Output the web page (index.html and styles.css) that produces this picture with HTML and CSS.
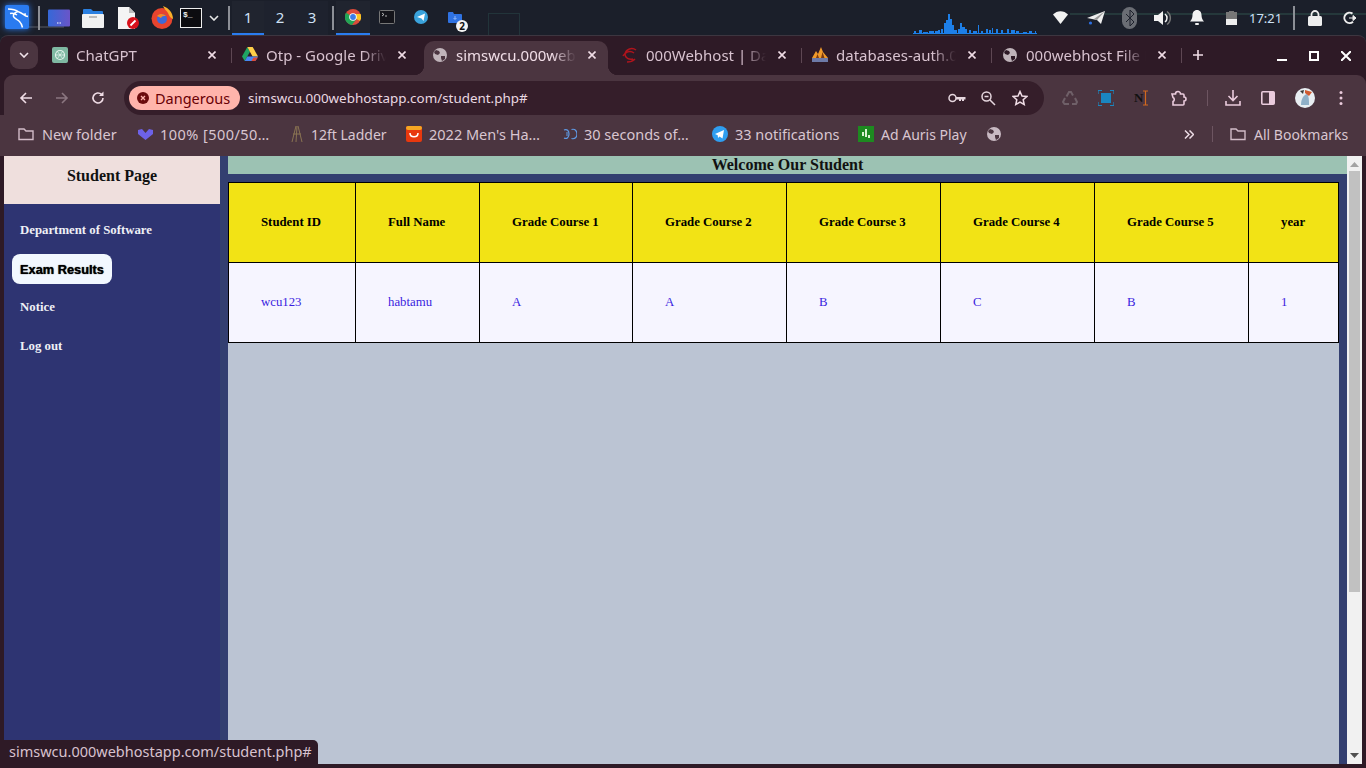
FILE: index.html
```html
<!DOCTYPE html>
<html lang="en">
<head>
<meta charset="utf-8">
<title>simswcu.000webhostapp.com/student.php#</title>
<link rel="stylesheet" href="styles.css">
</head>
<body>
<div class="panel">
  <div class="panel-left">
    <svg class="kali" width="28" height="28" viewBox="0 0 28 28"><rect width="24" height="24" x="2" y="1" rx="2" fill="#2a7bf0"/><path d="M5 5c4 0 8 1 11 3 3 1 5 3 7 4l2 .5M15 7.500c-3 1-5 3-4.500 5 .5 2 4 3 6 5 1.500 1.500 2.500 3.500 3 6M7 9.500c2-.5 5 0 7 1.500M20 10.500l3-.5" fill="none" stroke="#fff" stroke-width="1.500"/></svg>
    <i class="vsep first"></i>
    <svg class="pi desk" width="22" height="18" viewBox="0 0 22 18"><defs><linearGradient id="dk" x1="0" x2="1"><stop offset="0" stop-color="#3568d8"/><stop offset="1" stop-color="#6a55c8"/></linearGradient></defs><rect width="22" height="17" y=".5" rx="1" fill="url(#dk)"/><path d="M9 14h4" stroke="#fff" stroke-dasharray="1 .5" stroke-width="1.200"/></svg>
    <svg class="pi files" width="22" height="20" viewBox="0 0 22 20"><path d="M1 7V2a1 1 0 0 1 1-1h7l2 2h9a1 1 0 0 1 1 1v3z" fill="#2a7fe0"/><rect y="6" width="22" height="14" rx="1" fill="#f1f1f1"/><rect x="7" y="8" width="8" height="2" fill="#bbb"/></svg>
    <svg class="pi note" width="22" height="22" viewBox="0 0 22 22"><path d="M0 0h11l6 6v16H0z" fill="#f4f4f4"/><path d="M11 0l6 6h-6z" fill="#bbb"/><circle cx="15" cy="16" r="6" fill="#d8111b"/><path d="M12.500 18.500l5-5" stroke="#fff" stroke-width="1.800"/></svg>
    <svg class="pi fox" width="22" height="23" viewBox="0 0 22 23"><circle cx="11" cy="12.500" r="10.500" fill="#e7442e"/><path d="M12 0c6 2 10 7 10 13-3-1-4-4-5-6-1-2-4-4-5-7z" fill="#fbb02a"/><circle cx="11" cy="13" r="5" fill="#3f69d9"/><path d="M6 10c3-3 7-2 9 0-3 0-4 0-5 2z" fill="#f98a22"/></svg>
    <svg class="pi term" width="22" height="20" viewBox="0 0 22 20"><rect x=".5" y=".5" width="21" height="19" fill="#0c0c10" stroke="#eee"/><text x="3" y="9" class="term-t">$_</text></svg>
    <svg class="pi chev" width="10" height="6" viewBox="0 0 10 6"><path d="M1 1l4 4 4-4" fill="none" stroke="#e6e6e6" stroke-width="1.600"/></svg>
    <i class="vsep second"></i>
    <div class="work on">1</div>
    <div class="work">2</div>
    <div class="work">3</div>
    <i class="vsep third"></i>
    <div class="app on"><svg width="16" height="16" viewBox="0 0 16 16"><circle cx="8" cy="8" r="8" fill="#dd4b3a"/><path d="M8 8l7 4A8 8 0 0 0 15.500 5H8z" fill="#fbc522"/><path d="M8 8L1 3.800A8 8 0 0 0 7 16l4.500-6z" fill="#21a556"/><circle cx="8" cy="8" r="3.800" fill="#fff"/><circle cx="8" cy="8" r="2.900" fill="#3d7de8"/></svg></div>
    <div class="app"><svg width="16" height="14" viewBox="0 0 16 14"><rect x=".5" y=".5" width="15" height="13" rx="1" fill="#14141a" stroke="#777"/><path d="M3 3l2 1.500L3 6M6 6h2" fill="none" stroke="#ddd" stroke-width=".8"/></svg></div>
    <div class="app"><svg width="14" height="14" viewBox="0 0 14 14"><circle cx="7" cy="7" r="7" fill="#3aa3dc"/><path d="M3 7l8-3.500L9.500 11 7.500 8.500z" fill="#fff"/></svg></div>
    <div class="app badge-app"><svg width="14" height="11" viewBox="0 0 14 11"><path d="M0 1a1 1 0 0 1 1-1h4l1 2h7a1 1 0 0 1 1 1v7a1 1 0 0 1-1 1H1a1 1 0 0 1-1-1z" fill="#2f72e2"/><path d="M7 4v3M5.500 6L7 7.500 8.500 6" stroke="#bcd3ff" stroke-width=".7" fill="none"/></svg><b class="count">2</b></div>
  </div>
  <div class="panel-right">
    <svg class="spark" width="128" height="35" viewBox="0 0 128 35"><path fill="#1d7fe8" transform="translate(0 -1)" d="M2 34h124v1H2zM3 32h2v2H3zM8 31h3v3H8zM12 33h5v1h-5zM18 32h5v2h-5zM24 32h3v2h-3zM27 31h2v3h-2zM30 30h2v4h-2zM33 24h2v10h-2zM35 21h2v13h-2zM37 15h2v19h-2zM39 20h2v14h-2zM41 26h2v8h-2zM43 31h3v3h-3zM47 30h3v4h-3zM49 24h2v10h-2zM51 28h3v6h-3zM54 30h2v4h-2zM58 31h2v3h-2zM62 32h4v2h-4zM67 26h1v8h-1zM70 32h2v2h-2zM75 30h2v4h-2zM78 31h2v3h-2zM81 29h1v5h-1zM85 30h2v4h-2zM90 31h2v3h-2zM96 30h2v4h-2zM100 31h4v3h-4zM105 32h3v2h-3zM112 33h4v1h-4zM118 32h3v2h-3zM124 32h1v2h-1z"/></svg>
    <svg class="tray wifi" width="15" height="13" viewBox="0 0 15 13"><path d="M0 3.500C4-1 11-1 15 3.500L7.500 13z" fill="#f2f2f2"/></svg>
    <svg class="tray plane" width="18" height="15" viewBox="0 0 18 15"><path d="M0 8L18 1l-4 13-4-4z" fill="#eee"/><path d="M10 10l8-9L7 9z" fill="#999"/><circle cx="3.500" cy="13" r="1.600" fill="#2d6fe0"/></svg>
    <div class="tray bt"><svg width="8" height="18" viewBox="0 0 8 18"><path d="M0 5l8 8-4 4V1l4 4-8 8" fill="none" stroke="#1d212c" stroke-width="1"/></svg></div>
    <svg class="tray vol" width="18" height="16" viewBox="0 0 18 16"><path d="M0 5h4l5-4v14l-5-4H0z" fill="#f2f2f2"/><path d="M11 4a5 5 0 0 1 0 8" fill="none" stroke="#f2f2f2" stroke-width="1.500"/><path d="M13 1.500a8 8 0 0 1 0 13" fill="none" stroke="#777" stroke-width="1.500"/></svg>
    <svg class="tray bell" width="14" height="15" viewBox="0 0 14 15"><path d="M7 0c3 0 4.500 2.500 4.500 5 0 3 1 5 2.500 6.500H0C1.500 10 2.500 8 2.500 5 2.500 2.500 4 0 7 0z" fill="#f2f2f2"/><rect x="5" y="13" width="4" height="2" rx="1" fill="#f2f2f2"/></svg>
    <svg class="tray batt" width="11" height="14" viewBox="0 0 11 14"><rect x="3" y="0" width="5" height="1" fill="#777"/><rect x="0" y="1" width="11" height="7" fill="#777"/><rect x="0" y="8" width="11" height="6" fill="#eee"/></svg>
    <span class="clock">17:21</span>
    <i class="vsep fourth"></i>
    <svg class="tray lock" width="14" height="16" viewBox="0 0 14 16"><path d="M3.500 7V4.500a3.500 3.500 0 0 1 7 0V7" fill="none" stroke="#eee" stroke-width="1.800"/><rect y="6" width="14" height="10" rx="1.500" fill="#eee"/></svg>
    <svg class="tray power" width="14" height="14" viewBox="0 0 14 14"><path d="M9.500 2.600A5.200 5.200 0 1 0 10 10.800" fill="none" stroke="#eee" stroke-width="2"/><path d="M6 7h6M10 4.500L13 7l-3 2.500z" fill="#eee" stroke="#eee"/></svg>
  </div>
</div>

<div class="window">
  <div class="tabstrip">
    <button class="tabsearch"><svg width="10" height="6" viewBox="0 0 10 6"><path d="M1 1l4 4 4-4" fill="none" stroke="#f0e4ea" stroke-width="1.600"/></svg></button>
    <div class="tab"><svg class="fav" width="16" height="16" viewBox="0 0 16 16"><rect width="16" height="16" rx="2" fill="#7fb8a2"/><circle cx="8" cy="8" r="4.500" fill="none" stroke="#e4f1ec" stroke-width="1.200"/><path d="M5 4l6 8M11 4l-6 8M3.500 8h9" stroke="#e4f1ec" stroke-width=".8"/></svg><span class="tab-title">ChatGPT</span><svg class="x" width="8" height="8" viewBox="0 0 8 8"><path d="M.5.500l7 7M7.500.500l-7 7" stroke="#f0dde6" stroke-width="1.600"/></svg><i class="tsep"></i></div>
    <div class="tab"><svg class="fav" width="16" height="15" viewBox="0 0 16 15"><path d="M5.300 0L0 9.400 2.700 14 8 4.700z" fill="#1fa463"/><path d="M5.300 0h5.400L16 9.400h-5.400z" fill="#ffcf48"/><path d="M5.300 9.400H16L13.300 14H2.700z" fill="#4687f4"/><path d="M13.300 14H9.500l2-3.500H16z" fill="#dd4b3a"/></svg><span class="tab-title">Otp - Google Drive</span><svg class="x" width="8" height="8" viewBox="0 0 8 8"><path d="M.5.500l7 7M7.500.500l-7 7" stroke="#f0dde6" stroke-width="1.600"/></svg></div>
    <div class="tab active"><svg class="fav fav14" width="14" height="14" viewBox="0 0 14 14"><circle cx="7" cy="7" r="7" fill="#c0b4ba"/><path d="M3 2l3 1 1 2-2 2-3-1-1-2zM8 8h4v3l-3 2-1-3z" fill="#4b3540"/></svg><span class="tab-title">simswcu.000webhostapp</span><svg class="x" width="8" height="8" viewBox="0 0 8 8"><path d="M.5.500l7 7M7.500.500l-7 7" stroke="#f0dde6" stroke-width="1.600"/></svg><i class="corner cl"></i><i class="corner cr"></i></div>
    <div class="tab"><svg class="fav" width="16" height="16" viewBox="0 0 16 16"><path d="M14 3C10 0 4 2 3 7c0 4 4 6 8 5M1 9c2-4 7-6 11-3M5 15c3 0 6-1 8-3" fill="none" stroke="#b0141c" stroke-width="1.500"/></svg><span class="tab-title">000Webhost | Database</span><svg class="x" width="8" height="8" viewBox="0 0 8 8"><path d="M.5.500l7 7M7.500.500l-7 7" stroke="#f0dde6" stroke-width="1.600"/></svg><i class="tsep"></i></div>
    <div class="tab"><svg class="fav" width="16" height="16" viewBox="0 0 16 16"><path d="M0 11L4 4l2 3 3-7 2 5 5 6z" fill="#f09a2a"/><path d="M4 11l1.500-4 1.500 4zM9 11l1.500-6 2 6z" fill="#7a3a10"/><rect y="11" width="16" height="4" fill="#6d7aa8"/></svg><span class="tab-title">databases-auth.000web</span><svg class="x" width="8" height="8" viewBox="0 0 8 8"><path d="M.5.500l7 7M7.500.500l-7 7" stroke="#f0dde6" stroke-width="1.600"/></svg><i class="tsep"></i></div>
    <div class="tab"><svg class="fav fav14" width="14" height="14" viewBox="0 0 14 14"><circle cx="7" cy="7" r="7" fill="#c0b4ba"/><path d="M3 2l3 1 1 2-2 2-3-1-1-2zM8 8h4v3l-3 2-1-3z" fill="#2e1a26"/></svg><span class="tab-title">000webhost File Manager</span><svg class="x" width="8" height="8" viewBox="0 0 8 8"><path d="M.5.500l7 7M7.500.500l-7 7" stroke="#f0dde6" stroke-width="1.600"/></svg><i class="tsep"></i></div>
    <svg class="newtab" width="12" height="12" viewBox="0 0 12 12"><path d="M6 1v10M1 6h10" stroke="#f0dde6" stroke-width="1.600"/></svg>
    <div class="winctl">
      <svg width="10" height="10" viewBox="0 0 10 10"><path d="M0 9h10" stroke="#fff" stroke-width="2"/></svg>
      <svg width="10" height="10" viewBox="0 0 10 10"><rect x="1" y="1" width="8" height="8" fill="none" stroke="#fff" stroke-width="2"/></svg>
      <svg width="10" height="10" viewBox="0 0 10 10"><path d="M0 0l10 10M10 0L0 10" stroke="#fff" stroke-width="2"/></svg>
    </div>
  </div>

  <div class="toolbar">
    <svg class="nav" width="16" height="16" viewBox="0 0 16 16"><path d="M14 8H3M8 3L3 8l5 5" fill="none" stroke="#f0dde6" stroke-width="1.600"/></svg>
    <svg class="nav" width="16" height="16" viewBox="0 0 16 16"><path d="M2 8h11M8 3l5 5-5 5" fill="none" stroke="#8b7680" stroke-width="1.600"/></svg>
    <svg class="nav" width="16" height="16" viewBox="0 0 16 16"><path d="M13 8a5 5 0 1 1-1.500-3.600" fill="none" stroke="#f0dde6" stroke-width="1.600"/><path d="M13.500 1.500V6H9z" fill="#f0dde6"/></svg>
    <div class="omnibox">
      <div class="chip"><svg width="12" height="12" viewBox="0 0 12 12"><circle cx="6" cy="6" r="6" fill="#6b0c0c"/><path d="M4 4l4 4M8 4L4 8" stroke="#ffb4ab" stroke-width="1.300"/></svg><span>Dangerous</span></div>
      <span class="url">simswcu.000webhostapp.com/student.php#</span>
      <div class="omni-icons">
        <svg class="key" width="18" height="10" viewBox="0 0 18 10"><circle cx="4.500" cy="5" r="3.500" fill="none" stroke="#e6d6de" stroke-width="1.500"/><path d="M8 4h9.500v2.500H16V8h-2V6.500h-1V8h-2V6.500H8z" fill="#e6d6de"/></svg>
        <svg width="16" height="16" viewBox="0 0 16 16"><circle cx="6.500" cy="6.500" r="4.500" fill="none" stroke="#e6d6de" stroke-width="1.500"/><path d="M10 10l5 5M4.500 6.500h4" stroke="#e6d6de" stroke-width="1.500"/></svg>
        <svg width="16" height="16" viewBox="0 0 16 16"><path d="M8 1.500l2 4.500 4.800.5-3.600 3.200 1 4.800L8 12l-4.200 2.500 1-4.800L1.200 6.500 6 6z" fill="none" stroke="#f0dde6" stroke-width="1.500"/></svg>
      </div>
    </div>
    <div class="ext">
      <svg width="16" height="16" viewBox="0 0 16 16"><path d="M4.500 6.500L7 2h2l2 3.500M13 8l2 4-1 2h-4M7 14H2.500L1 12l2-4" fill="none" stroke="#6f6068" stroke-width="2"/></svg>
      <svg width="16" height="16" viewBox="0 0 16 16"><path d="M0 4V.5h4M12 .5h4V4M16 12v3.500h-4M4 15.500H0V12" fill="none" stroke="#1a86c0" stroke-width="1.200"/><rect x="3" y="3" width="10" height="10" fill="#1a86c0"/></svg>
      <div class="nic"><b>N</b><svg width="5" height="16" viewBox="0 0 5 16"><path d="M0 1h5M2.500 1v14M0 15h5" fill="none" stroke="#d2691e" stroke-width="1.200"/></svg></div>
      <svg width="17" height="16" viewBox="0 0 17 16"><path d="M2 4h3.500a2.500 2.500 0 0 1 5 0H13a1 1 0 0 1 1 1v2a2 2 0 0 1 0 4v3a1 1 0 0 1-1 1H3v-3.500a2.200 2.200 0 0 0 0-4z" fill="none" stroke="#eacbdc" stroke-width="1.600"/></svg>
      <i class="tbsep"></i>
      <svg width="16" height="16" viewBox="0 0 16 16"><path d="M8 0v10M3.500 6L8 10.500 12.500 6M1 11v4h14v-4" fill="none" stroke="#eacbdc" stroke-width="1.600"/></svg>
      <svg width="14" height="14" viewBox="0 0 14 14"><rect x=".8" y=".8" width="12.400" height="12.400" rx="1" fill="none" stroke="#eacbdc" stroke-width="1.600"/><rect x="8" y="1" width="5" height="12" fill="#eacbdc"/></svg>
      <svg class="avatar" width="20" height="20" viewBox="0 0 20 20"><circle cx="10" cy="10" r="10" fill="#e8eef2"/><path d="M6 17c0-5 2-10 6-11 2 2 2 6 2 11z" fill="#8fb0c8"/><path d="M10 2l7 2-3 4-4-3z" fill="#d05a30"/><path d="M5 3l4-1-1 4z" fill="#3a3a3a"/></svg>
      <svg width="4" height="16" viewBox="0 0 4 16"><circle cx="2" cy="2.500" r="1.500" fill="#eacbdc"/><circle cx="2" cy="8" r="1.500" fill="#eacbdc"/><circle cx="2" cy="13.500" r="1.500" fill="#eacbdc"/></svg>
    </div>
  </div>

  <div class="bookmarks">
    <a class="bm b1"><svg width="16" height="14" viewBox="0 0 16 14"><path d="M1 12.500V2h5l2 2h7v8.500z" fill="none" stroke="#d2bcc8" stroke-width="1.400"/></svg>New folder</a>
    <a class="bm b2"><svg width="15" height="11" viewBox="0 0 15 11"><path d="M0 1l4-1 3.500 4L11 0l4 1v4l-7.500 6L0 5z" fill="#6d62e8"/></svg>100% [500/50…</a>
    <a class="bm b3"><svg width="12" height="16" viewBox="0 0 12 16"><path d="M5 0L1 16M6 0L5 16M7 0l4 16M2 8h8" stroke="#8a7452" stroke-width="1" fill="none"/></svg>12ft Ladder</a>
    <a class="bm b4"><svg width="16" height="16" viewBox="0 0 16 16"><rect width="16" height="16" rx="2" fill="#e8380e"/><rect width="16" height="4" rx="2" fill="#f6a623"/><path d="M4 7c0 5 8 5 8 0" fill="none" stroke="#fff" stroke-width="1.500"/></svg>2022 Men's Ha…</a>
    <a class="bm b5"><svg width="14" height="12" viewBox="0 0 14 12"><path d="M1 2C4 .5 6 3 6 6s-2 5.500-5 4M8.500 1.500C12 .5 14 3 14 6s-2 5.500-5.500 4.500M3 5h2M3 7h2" fill="none" stroke="#5f9ce8" stroke-width="1.200"/></svg>30 seconds of…</a>
    <a class="bm b6"><svg width="16" height="16" viewBox="0 0 16 16"><circle cx="8" cy="8" r="8" fill="#2f9ef0"/><path d="M3 8l9-4-1.500 8.500-3-2L6 12l-.3-2.800z" fill="#fff"/></svg>33 notifications</a>
    <a class="bm b7"><svg width="16" height="16" viewBox="0 0 16 16"><rect width="16" height="16" fill="#1d8a20"/><path d="M4 6h2v4H4zM7 3h2v8H7zM10 9h2v3h-2z" fill="#d9f2d0"/></svg>Ad Auris Play</a>
    <a class="bm b8"><svg width="14" height="14" viewBox="0 0 14 14"><circle cx="7" cy="7" r="7" fill="#c8b9c2"/><path d="M3 2l3 1 1 2-2 2-3-1-1-2zM8 8h4v3l-3 2-1-3z" fill="#4b3540"/></svg></a>
    <svg class="more" width="10" height="9" viewBox="0 0 10 9"><path d="M1 .5l4 4-4 4M5.500.5l4 4-4 4" fill="none" stroke="#eddde6" stroke-width="1.500"/></svg>
    <i class="bmsep"></i>
    <a class="bm all"><svg width="16" height="14" viewBox="0 0 16 14"><path d="M1 12.500V2h5l2 2h7v8.500z" fill="none" stroke="#d2bcc8" stroke-width="1.400"/></svg>All Bookmarks</a>
  </div>

  <div class="viewport">
    <aside class="sidebar">
      <h2 class="side-head">Student Page</h2>
      <nav class="side-nav">
        <a class="nav-link">Department of Software</a>
        <a class="nav-link current">Exam Results</a>
        <a class="nav-link">Notice</a>
        <a class="nav-link">Log out</a>
      </nav>
    </aside>
    <main class="main">
      <h3 class="welcome">Welcome Our Student</h3>
      <div class="content">
        <table class="grades">
          <colgroup>
            <col class="c1"><col class="c2"><col class="c3a"><col class="c3"><col class="c3"><col class="c3"><col class="c3"><col class="c8">
          </colgroup>
          <tr>
            <th>Student ID</th><th>Full Name</th><th>Grade Course 1</th><th>Grade Course 2</th><th>Grade Course 3</th><th>Grade Course 4</th><th>Grade Course 5</th><th>year</th>
          </tr>
          <tr>
            <td>wcu123</td><td>habtamu</td><td>A</td><td>A</td><td>B</td><td>C</td><td>B</td><td>1</td>
          </tr>
        </table>
      </div>
    </main>
    <div class="scrollbar">
      <svg width="9" height="5" viewBox="0 0 9 5"><path d="M4.500 0L9 5H0z" fill="#a3a3a3"/></svg>
      <div class="thumb"></div>
      <svg width="9" height="5" viewBox="0 0 9 5"><path d="M0 0h9L4.500 5z" fill="#505050"/></svg>
    </div>
    <div class="status">simswcu.000webhostapp.com/student.php#</div>
  </div>
</div>
</body>
</html>
```

FILE: styles.css
```css
* { box-sizing: border-box; }
html, body { margin: 0; height: 100%; overflow: hidden; }
body { width: 1366px; height: 768px; background: #1b1f2a; font-family: "Noto Sans", sans-serif; display: flex; flex-direction: column; }
svg { display: block; flex: none; }

.panel {
  height: 35px; flex: none; display: flex; justify-content: space-between; align-items: center;
  background-color: #1b1f2a;
  background-image: linear-gradient(#25383b, #25383b), linear-gradient(#3a3d46, #3a3d46), linear-gradient(#22343a, #22343a), linear-gradient(#22343a, #22343a), linear-gradient(#22343a, #22343a);
  background-repeat: no-repeat;
  background-size: 296px 2px, 36px 2px, 1px 21px, 1px 21px, 32px 1px;
  background-position: 1070px 13px, 28px 26px, 488px 14px, 519px 14px, 488px 13px;
}
.panel-left, .panel-right { display: flex; align-items: center; height: 35px; }
.kali { margin-left: 3px; filter: drop-shadow(0 0 3px #2a7bf0); }
.vsep { display: block; width: 2px; height: 24px; background: #8c8f96; flex: none; }
.vsep.first { margin-left: 7px; }
.pi.desk { margin-left: 8px; }
.pi.files { margin-left: 12px; }
.pi.note { margin-left: 14px; }
.pi.fox { margin-left: 11px; }
.pi.term { margin-left: 7px; }
.term-t { font: bold 8px "Liberation Mono", monospace; fill: #eee; }
.pi.chev { margin-left: 7px; }
.vsep.second { margin-left: 9px; margin-right: 2px; }
.work { width: 32px; height: 34px; display: flex; align-items: center; justify-content: center; color: #cfe0f4; font-size: 15px; border-bottom: 2px solid transparent; margin-top: 1px; background: #1e222e; }
.work.on { border-bottom-color: #2a7cf0; background: #20242f; }
.vsep.third { margin-left: 4px; margin-right: 2px; }
.app { width: 34px; height: 34px; margin-top: 1px; display: flex; align-items: center; justify-content: center; border-bottom: 2px solid transparent; position: relative; }
.app.on { border-bottom-color: #2a7cf0; background: #20242f; }
.count { position: absolute; left: 18px; top: 19px; width: 12px; height: 12px; border-radius: 50%; background: #f4f4f4; color: #111; font: bold 10px/12px "Noto Sans", sans-serif; text-align: center; }
.spark { margin-right: 14px; }
.tray { flex: none; }
.wifi { margin-right: 19px; }
.plane { margin-right: 17px; }
.bt { width: 15px; height: 22px; background: #6a6d74; border-radius: 8px; display: flex; align-items: center; justify-content: center; margin-right: 17px; }
.vol { margin-right: 18px; }
.bell { margin-right: 22px; }
.batt { margin-right: 12px; }
.clock { color: #cfe0f4; font-size: 13px; width: 32px; white-space: nowrap; margin-right: 12px; }
.vsep.fourth { margin-right: 13px; }
.lock { margin-right: 21px; }
.power { margin-right: 9px; }

.window { flex: 1; background: #2e1a26; border-radius: 8px 8px 0 0; display: flex; flex-direction: column; min-height: 0; border-top: 1px solid #3d3640; }
.tabstrip { height: 39px; display: flex; align-items: flex-start; padding-left: 10px; flex: none; padding-top: 5px; position: relative; }
.tabsearch { width: 28px; height: 28px; border: 0; border-radius: 9px; background: #4b3540; display: flex; align-items: center; justify-content: center; padding: 0; margin-right: 4px; }
.tab { width: 190px; height: 34px; display: flex; align-items: center; color: #d8c2cf; font-size: 15px; position: relative; padding: 0 0 7px 10px; flex: none; }
.fav { margin-right: 8px; }
.fav14 { margin: 0 9px 0 1px; }
.tab-title { flex: 1; white-space: nowrap; overflow: hidden; min-width: 0; -webkit-mask-image: linear-gradient(to right, #000 80%, transparent 100%); mask-image: linear-gradient(to right, #000 80%, transparent 100%); }
.x { margin: 0 16px 0 12px; }
.tsep { position: absolute; right: 0; top: 7px; width: 1px; height: 15px; background: #5e4753; }
.tab.active { color: #f0dde6; isolation: isolate; }
.tab.active::before { content: ""; position: absolute; z-index: -1; left: 2px; right: 4px; top: 0; bottom: 0; background: #4b3540; border-radius: 10px 10px 0 0; }
.corner { position: absolute; bottom: 0; width: 10px; height: 10px; z-index: -1; }
.cl { left: -8px; background: radial-gradient(circle at 0 0, transparent 10px, #4b3540 10.5px); }
.cr { right: -6px; background: radial-gradient(circle at 100% 0, transparent 10px, #4b3540 10.5px); }
.newtab { margin: 8px 0 0 10px; }
.winctl { position: absolute; right: 15px; top: 15px; display: flex; gap: 22px; }

.toolbar { height: 40px; background: #4b3540; border-radius: 9px 9px 0 0; display: flex; align-items: flex-end; margin-left: 4px; flex: none; padding-left: 14px; }
.nav { margin: 0 20px 9px 0; }
.omnibox { width: 920px; height: 34px; margin-left: -2px; background: #351e2a; border-radius: 17px; display: flex; align-items: center; padding-left: 5px; flex: none; }
.chip { width: 111px; height: 24px; background: #ffb4ab; border-radius: 12px; display: flex; align-items: center; color: #690005; font-size: 14.5px; padding-left: 8px; gap: 6px; flex: none; }
.url { margin-left: 8px; color: #ead9e2; font-size: 13.4px; white-space: nowrap; }
.omni-icons { margin-left: auto; display: flex; align-items: center; gap: 16px; padding-right: 16px; }
.key { margin-right: -2px; }
.ext { display: flex; align-items: center; height: 34px; padding-left: 18px; }
.ext > * { margin-right: 20px; }
.ext > .tbsep { margin-right: 17px; }
.ext > .avatar { margin-right: 24px; }
.nic { display: flex; align-items: center; font: bold 13px "Liberation Serif", serif; color: #111; width: 16px; }
.tbsep { width: 1px; height: 16px; background: #6d5561; }

.bookmarks { height: 41px; background: #4b3540; display: flex; align-items: center; color: #d9c6d1; font-size: 14.5px; position: relative; flex: none; padding: 0 0 3px 18px; }
.bm { display: flex; align-items: center; gap: 7px; white-space: nowrap; }
.b1 { width: 120px; gap: 8px; }
.b2 { width: 153px; letter-spacing: .45px; }
.b3 { width: 115px; gap: 8px; font-size: 14px; }
.b4 { width: 157px; }
.b5 { width: 149px; }
.b6 { width: 146px; }
.b7 { width: 129px; font-size: 14px; }
.b8 { width: 14px; }
.more { margin-left: 183px; }
.bmsep { width: 1px; height: 16px; background: #6d5561; margin-left: 18px; }
.all { margin-left: 17px; gap: 8px; font-size: 14px; }

.viewport { flex: 1; min-height: 0; margin: 0 4px 4px; display: flex; position: relative; background: #333f70; }
.sidebar { width: 216px; background: #2e3472; flex: none; }
.side-head { margin: 0; height: 48px; background: #efdfdd; color: #111; text-align: center; font: bold 16px/39px "Liberation Serif", serif; }
.side-nav { display: flex; flex-direction: column; align-items: flex-start; padding: 11px 8px 0; font: bold 12.8px/15px "Liberation Serif", serif; }
.nav-link { padding: 8px; margin-bottom: 8px; border-radius: 8px; height: 30.5px; color: #eef0f6; }
.nav-link.current { background: #f2f8ff; color: #000; font-family: "Liberation Sans", sans-serif; text-shadow: 0 0 1px #000; }
.main { width: 1119px; margin-left: 8px; flex: none; display: flex; flex-direction: column; font-family: "Liberation Serif", serif; }
.welcome { margin: 0; height: 18px; background: #9cc2b3; color: #111; text-align: center; font: bold 16px/18px "Liberation Serif", serif; }
.content { flex: 1; background: linear-gradient(#333f70 8px, #bbc4d3 8px) no-repeat; background-size: 1111px 100%; }
.grades { border-collapse: collapse; table-layout: fixed; width: 1110px; margin-top: 8px; border: 1px solid #000; font-size: 12.8px; background: #f6f5ff; }
.grades th, .grades td { border: 1px solid #000; height: 80px; padding: 0 0 0 32px; text-align: left; vertical-align: middle; }
.grades th { background: #f2e315; color: #000; font-weight: bold; }
.grades td { color: #3a1de0; }
.c1 { width: 127px; }
.c2 { width: 124px; }
.c3a { width: 153px; }
.c3 { width: 154px; }
.c8 { width: 90px; }
.scrollbar { width: 15px; background: #f1f1f1; display: flex; flex-direction: column; align-items: center; padding: 6px 0; flex: none; }
.thumb { width: 11px; flex: 1; background: #c1c1c1; margin: 4px 0 161px; }
.status { position: absolute; left: 0; bottom: 0; height: 24px; padding: 0 6px 0 5px; background: #2e1a26; color: #d8c2cf; font-size: 14.5px; line-height: 23px; border-radius: 0 5px 0 0; }
```
